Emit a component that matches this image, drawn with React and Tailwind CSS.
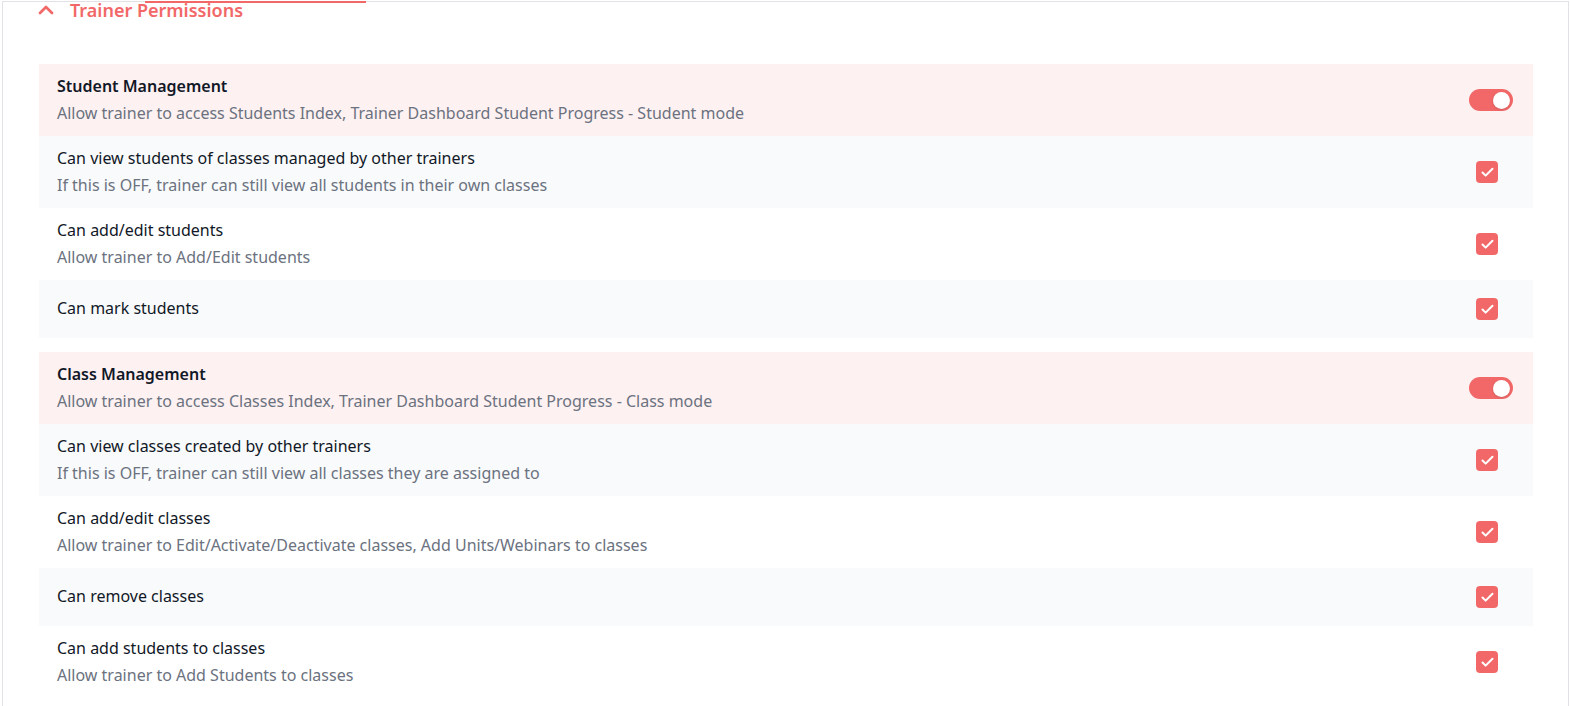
import React, { useState } from 'react';
import { ChevronUp, Check } from 'lucide-react';

const GROUPS = [
  {
    title: 'Student Management',
    desc: 'Allow trainer to access Students Index, Trainer Dashboard Student Progress - Student mode',
    items: [
      {
        title: 'Can view students of classes managed by other trainers',
        desc: 'If this is OFF, trainer can still view all students in their own classes',
      },
      { title: 'Can add/edit students', desc: 'Allow trainer to Add/Edit students' },
      { title: 'Can mark students' },
    ],
  },
  {
    title: 'Class Management',
    desc: 'Allow trainer to access Classes Index, Trainer Dashboard Student Progress - Class mode',
    items: [
      {
        title: 'Can view classes created by other trainers',
        desc: 'If this is OFF, trainer can still view all classes they are assigned to',
      },
      {
        title: 'Can add/edit classes',
        desc: 'Allow trainer to Edit/Activate/Deactivate classes, Add Units/Webinars to classes',
      },
      { title: 'Can remove classes' },
      { title: 'Can add students to classes', desc: 'Allow trainer to Add Students to classes' },
    ],
  },
];

function Toggle({ on, onClick }) {
  return (
    <button
      onClick={onClick}
      className={`w-[44px] h-[22px] rounded-full flex items-center px-[3px] ${on ? 'bg-[#f26868] justify-end' : 'bg-gray-300 justify-start'}`}
    >
      <span className="w-[17px] h-[17px] rounded-full bg-white shadow-sm" />
    </button>
  );
}

function Checkbox({ on, onClick }) {
  return (
    <button
      onClick={onClick}
      className={`w-[22px] h-[22px] rounded-[4px] flex items-center justify-center mr-[15px] ${on ? 'bg-[#f26868]' : 'bg-white border border-gray-300'}`}
    >
      {on && <Check size={15} strokeWidth={3.25} color="white" />}
    </button>
  );
}

function Group({ group }) {
  const [enabled, setEnabled] = useState(true);
  const [checks, setChecks] = useState(group.items.map(() => true));

  return (
    <div className="mb-[14px]">
      {/* group header */}
      <div className="h-[72px] bg-[#fef1f1] flex items-center justify-between pl-[18px] pr-[20px]">
        <div className="flex flex-col gap-[3px] pb-[2px]">
          <div className="text-[16px] leading-6 font-semibold text-[#111827]">{group.title}</div>
          <div className="text-[16px] leading-6 text-[#6b7280]">{group.desc}</div>
        </div>
        <Toggle on={enabled} onClick={() => setEnabled(!enabled)} />
      </div>

      {group.items.map((item, i) => (
        <div
          key={item.title}
          className={`${item.desc ? 'h-[72px]' : 'h-[58px]'} ${i % 2 === 0 ? 'bg-[#f9fafb]' : 'bg-white'} flex items-center justify-between pl-[18px] pr-[20px]`}
        >
          <div className="flex flex-col gap-[3px] pb-[2px]">
            <div className="text-[16px] leading-6 text-[#111827]">{item.title}</div>
            {item.desc && <div className="text-[16px] leading-6 text-[#6b7280]">{item.desc}</div>}
          </div>
          <Checkbox
            on={checks[i]}
            onClick={() => setChecks(checks.map((c, j) => (j === i ? !c : c)))}
          />
        </div>
      ))}
    </div>
  );
}

export default function App() {
  const [open, setOpen] = useState(true);

  return (
    <div className="h-screen bg-white pt-[1px] pl-[2px] pr-[1px] overflow-hidden" style={{ fontFamily: '"Noto Sans", sans-serif' }}>
      <div className="relative border-l border-r border-t border-[#e2e2e6] h-full">
        {/* active tab underline from the tab bar above */}
        <div className="absolute -top-[1px] left-[142px] w-[221px] h-[2px] bg-[#f26868]" />

        <button
          onClick={() => setOpen(!open)}
          className="-mt-[6px] h-[28px] flex items-center gap-[12px] pl-[31px] text-[#f26868]"
        >
          <ChevronUp size={24} strokeWidth={2.75} />
          <span className="text-[18px] font-semibold leading-7">Trainer Permissions</span>
        </button>

        {open && (
          <div className="mt-[40px] pl-[36px] pr-[35px]">
            {GROUPS.map((g) => (
              <Group key={g.title} group={g} />
            ))}
          </div>
        )}
      </div>
    </div>
  );
}
